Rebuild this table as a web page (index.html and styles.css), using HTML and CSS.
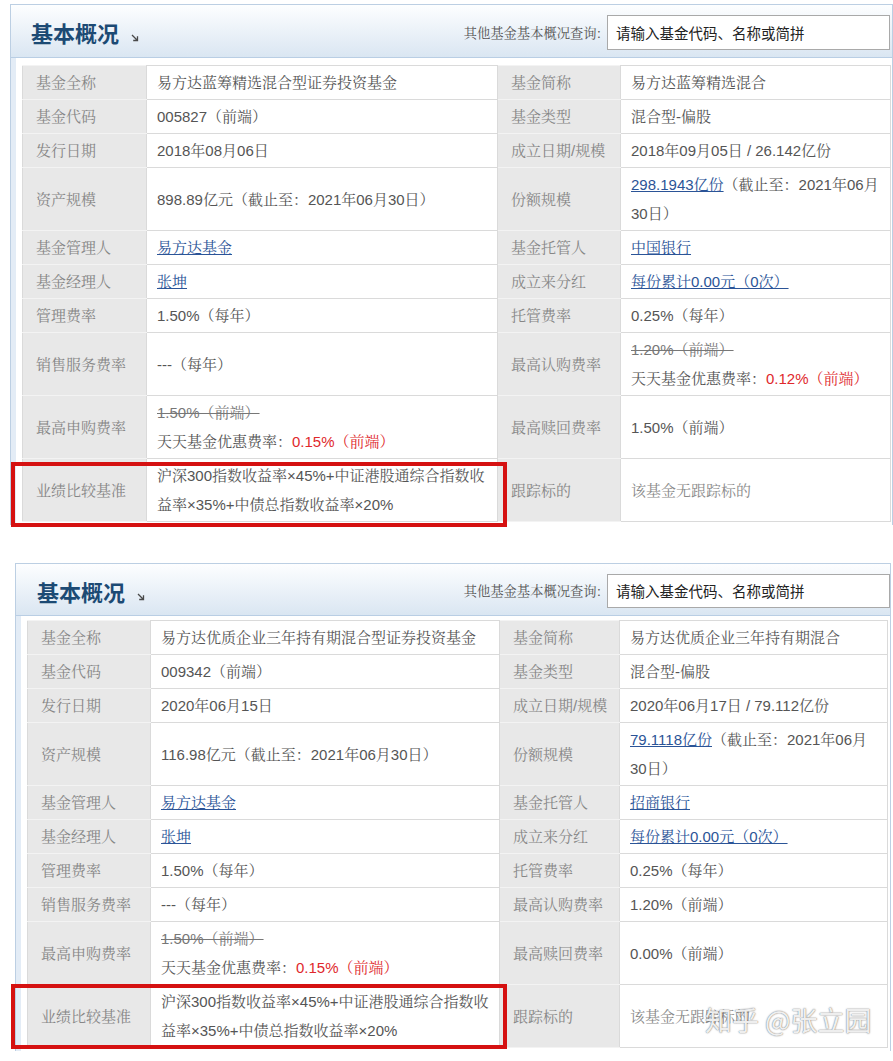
FILE: index.html
```html
<!DOCTYPE html>
<html lang="zh-CN">
<head>
<meta charset="utf-8">
<title>基本概况</title>
<link rel="stylesheet" href="styles.css">
</head>
<body>

<div class="panel p1">
  <div class="head">
    <h2 class="title">基本概况<svg class="arrow" width="8" height="8" viewBox="0 0 8 8"><path d="M1 1 L6.5 6.5 M6.5 2.2 V6.5 H2.2" fill="none" stroke="#4a4a4a" stroke-width="1.3"/></svg></h2>
    <div class="search">
      <span class="search-label">其他基金基本概况查询:</span>
      <div class="search-box">请输入基金代码、名称或简拼</div>
    </div>
  </div>
  <div class="body">
    <table class="info">
      <colgroup><col class="c1"><col class="c2"><col class="c3"><col class="c4"></colgroup>
      <tr><th>基金全称</th><td>易方达蓝筹精选混合型证券投资基金</td><th>基金简称</th><td>易方达蓝筹精选混合</td></tr>
      <tr><th>基金代码</th><td>005827（前端）</td><th>基金类型</th><td>混合型-偏股</td></tr>
      <tr><th>发行日期</th><td>2018年08月06日</td><th>成立日期/规模</th><td>2018年09月05日 / 26.142亿份</td></tr>
      <tr><th>资产规模</th><td>898.89亿元（截止至：2021年06月30日）</td><th>份额规模</th><td><a class="lnk">298.1943亿份</a>（截止至：2021年06月30日）</td></tr>
      <tr><th>基金管理人</th><td><a class="lnk">易方达基金</a></td><th>基金托管人</th><td><a class="lnk">中国银行</a></td></tr>
      <tr><th>基金经理人</th><td><a class="lnk">张坤</a></td><th>成立来分红</th><td><a class="lnk">每份累计0.00元（0次）</a></td></tr>
      <tr><th>管理费率</th><td>1.50%（每年）</td><th>托管费率</th><td>0.25%（每年）</td></tr>
      <tr><th>销售服务费率</th><td>---（每年）</td><th>最高认购费率</th><td><span class="old">1.20%（前端）</span><br>天天基金优惠费率：<span class="hot">0.12%（前端）</span></td></tr>
      <tr><th>最高申购费率</th><td><span class="old">1.50%（前端）</span><br>天天基金优惠费率：<span class="hot">0.15%（前端）</span></td><th>最高赎回费率</th><td>1.50%（前端）</td></tr>
      <tr><th>业绩比较基准</th><td>沪深300指数收益率×45%+中证港股通综合指数收益率×35%+中债总指数收益率×20%</td><th>跟踪标的</th><td class="muted">该基金无跟踪标的</td></tr>
    </table>
    <div class="mark"></div>
  </div>
</div>

<div class="panel p2">
  <div class="head">
    <h2 class="title">基本概况<svg class="arrow" width="8" height="8" viewBox="0 0 8 8"><path d="M1 1 L6.5 6.5 M6.5 2.2 V6.5 H2.2" fill="none" stroke="#4a4a4a" stroke-width="1.3"/></svg></h2>
    <div class="search">
      <span class="search-label">其他基金基本概况查询:</span>
      <div class="search-box">请输入基金代码、名称或简拼</div>
    </div>
  </div>
  <div class="body">
    <table class="info">
      <colgroup><col class="c1"><col class="c2"><col class="c3"><col class="c4"></colgroup>
      <tr><th>基金全称</th><td>易方达优质企业三年持有期混合型证券投资基金</td><th>基金简称</th><td>易方达优质企业三年持有期混合</td></tr>
      <tr><th>基金代码</th><td>009342（前端）</td><th>基金类型</th><td>混合型-偏股</td></tr>
      <tr><th>发行日期</th><td>2020年06月15日</td><th>成立日期/规模</th><td>2020年06月17日 / 79.112亿份</td></tr>
      <tr><th>资产规模</th><td>116.98亿元（截止至：2021年06月30日）</td><th>份额规模</th><td><a class="lnk">79.1118亿份</a>（截止至：2021年06月30日）</td></tr>
      <tr><th>基金管理人</th><td><a class="lnk">易方达基金</a></td><th>基金托管人</th><td><a class="lnk">招商银行</a></td></tr>
      <tr><th>基金经理人</th><td><a class="lnk">张坤</a></td><th>成立来分红</th><td><a class="lnk">每份累计0.00元（0次）</a></td></tr>
      <tr><th>管理费率</th><td>1.50%（每年）</td><th>托管费率</th><td>0.25%（每年）</td></tr>
      <tr><th>销售服务费率</th><td>---（每年）</td><th>最高认购费率</th><td>1.20%（前端）</td></tr>
      <tr><th>最高申购费率</th><td><span class="old">1.50%（前端）</span><br>天天基金优惠费率：<span class="hot">0.15%（前端）</span></td><th>最高赎回费率</th><td>0.00%（前端）</td></tr>
      <tr><th>业绩比较基准</th><td>沪深300指数收益率×45%+中证港股通综合指数收益率×35%+中债总指数收益率×20%</td><th>跟踪标的</th><td class="muted">该基金无跟踪标的</td></tr>
    </table>
    <div class="mark"></div>
    <div class="watermark">知乎 @张立园</div>
  </div>
</div>

</body>
</html>
```

FILE: styles.css
```css
* { box-sizing: border-box; }

body {
  margin: 0;
  background: #fff;
  overflow-x: hidden;
  font-family: "Liberation Sans", "Noto Serif CJK SC", "Noto Sans CJK SC", sans-serif;
}

.panel {
  position: relative;
  border: 1px solid #bccfe3;
  border-bottom: none;
  box-shadow: inset 5px 0 0 #e3ecf6;
}

.p1 { margin: 4px 0 0 10px; width: 883px; }
.p2 { margin: 38px 0 0 15px; width: 876px; }

.head {
  height: 53px;
  display: flex;
  align-items: center;
  padding-left: 20px;
  padding-top: 2px;
  background: linear-gradient(#fdfeff, #dae6f2);
  border-bottom: 1px solid #b9cee4;
}
.p2 .head { height: 52px; padding-left: 21px; }

.title {
  margin: 0;
  display: flex;
  align-items: flex-end;
  font: bold 22px/1 "Noto Sans CJK SC", sans-serif;
  color: #1c4a74;
}
.arrow { margin: 0 0 1px 12px; }

.search {
  margin-left: auto;
  display: flex;
  align-items: center;
  gap: 6px;
}
.search-label {
  font-size: 13.3px;
  color: #555;
  font-family: "Noto Serif CJK SC", "Noto Sans CJK SC", serif;
}
.search-box {
  width: 283px;
  height: 35px;
  margin-right: 2px;
  padding-left: 8px;
  display: flex;
  align-items: center;
  border: 1px solid #a9a9a9;
  background: #fff;
  font: 14.5px "Noto Sans CJK SC", sans-serif;
  color: #222;
}
.p2 .search-box { height: 34px; margin-right: 0; }

.body {
  position: relative;
  padding: 7px 0 3px 11px;
}
.p2 .body { padding-top: 4px; }

.info {
  border-collapse: collapse;
  table-layout: fixed;
  border: 1px solid #d6d6d6;
  font-size: 15px;
}
.p1 .info { width: 868px; }
.p1 .c1 { width: 124px; }
.p1 .c2 { width: 351px; }
.p1 .c3 { width: 123px; }
.p1 .c4 { width: 270px; }

.p2 .info { width: 860px; }
.p2 .c1 { width: 123px; }
.p2 .c2 { width: 349px; }
.p2 .c3 { width: 120px; }
.p2 .c4 { width: 268px; }

.info th,
.info td {
  line-height: 29px;
  border: 1px solid #dadada;
  vertical-align: middle;
  text-align: left;
}
.info th {
  padding: 2px 4px 2px 13px;
  background: #e8e8e8;
  color: #868686;
  font-weight: normal;
  border-top-color: #f3f3f3;
  border-bottom-color: #f3f3f3;
}
.info td {
  padding: 2px 6px 2px 10px;
  color: #555;
  background: #fff;
}
.info td.muted { color: #8a8a8a; }

.lnk {
  color: #2b5497;
  text-decoration: underline;
}
.old {
  color: #777;
  text-decoration: line-through;
}
.hot { color: #e0282c; }

.mark {
  position: absolute;
  height: 65px;
  width: 496px;
  border: 4px solid #d51111;
  pointer-events: none;
}
.p1 .mark { left: 0; bottom: -2px; }
.p2 .mark { left: -5px; bottom: 2px; }

.watermark {
  position: absolute;
  left: 689px;
  top: 390px;
  font: 27px/1 "Noto Sans CJK SC", sans-serif;
  color: rgba(255, 255, 255, 0.9);
  text-shadow: 0 0 1px #777, 0 0 2px rgba(0, 0, 0, 0.35);
  white-space: nowrap;
}
```
